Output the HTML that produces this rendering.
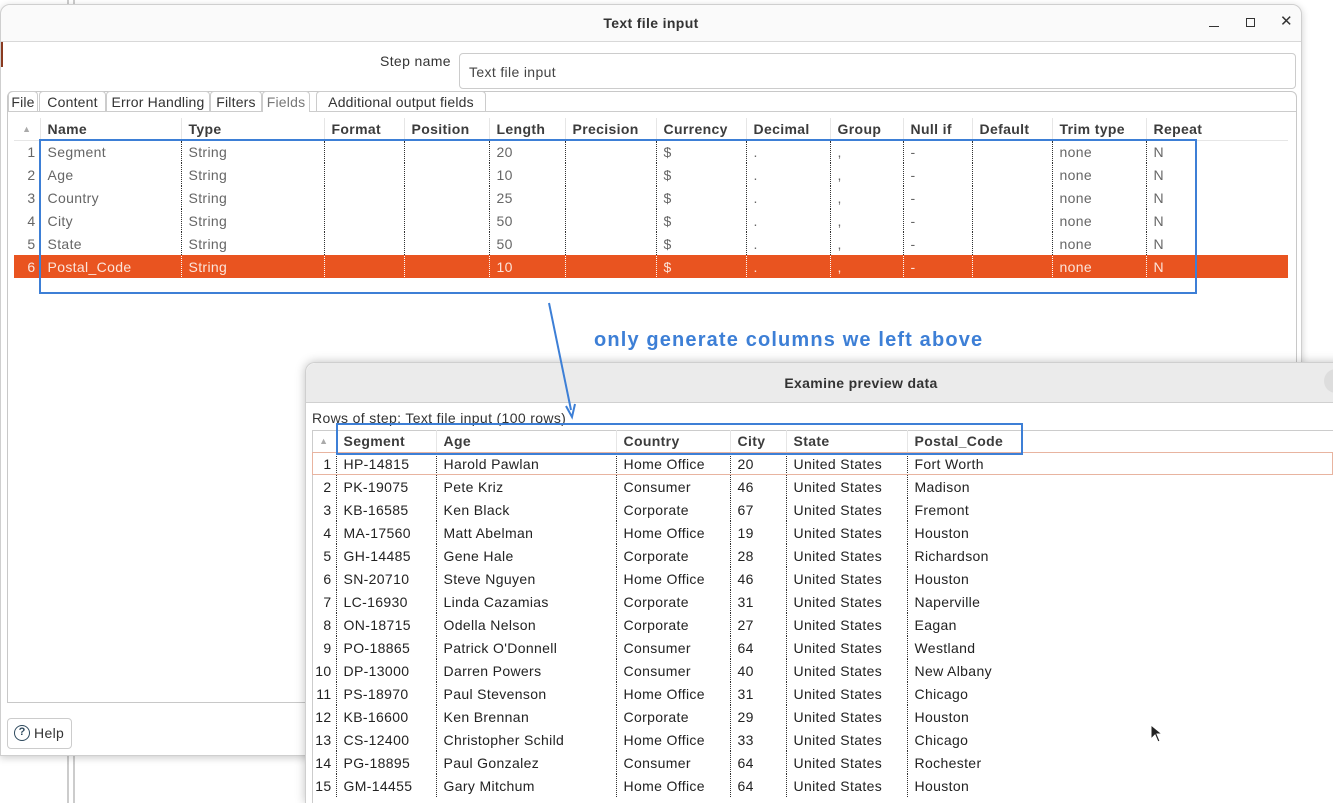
<!DOCTYPE html>
<html><head><meta charset="utf-8"><style>
*{box-sizing:border-box;margin:0;padding:0}
html,body{width:1333px;height:803px;overflow:hidden}
body{background:#fff;font-family:"Liberation Sans",sans-serif;font-size:14px;color:#333;position:relative;letter-spacing:0.35px}
.abs{position:absolute}
table{border-collapse:collapse;table-layout:fixed}
td,th{white-space:nowrap;overflow:hidden;text-align:left;padding:0 0 0 7px}
th{font-weight:bold;color:#3c3c3c;height:22px;border-left:1px solid #e6e6e6;border-bottom:1px solid #e6e6e6}
td{height:23px;border-left:1px dotted #333}
td.n{text-align:right;padding:0 4px 0 0;border-left:none;color:#555}
.t1 td{color:#666}
.t1 tr.sel td{background:#e95420;color:#fbe4da;border-left-color:#e95420}
.t2 td{color:#222}
.tab{position:absolute;top:0;height:20px;border:1px solid #ccc;border-bottom:none;border-radius:4px 4px 0 0;text-align:center;line-height:20px;letter-spacing:0.2px}
</style></head><body>
<div class="abs" style="left:67px;top:0;width:8px;height:803px;border-left:2px solid #ccc;border-right:2px solid #ccc"></div>

<div class="abs" style="left:0;top:4px;width:1302px;height:752px;background:#fff;border:1px solid #cfcfcf;border-radius:10px 10px 0 0;box-shadow:0 2px 8px rgba(0,0,0,.2)">
 <div class="abs" style="left:0;top:0;width:1300px;height:37px;background:#fafafa;border-bottom:1px solid #d8d8d8;border-radius:10px 10px 0 0"></div>
 <div class="abs" style="left:0;top:10px;width:1300px;text-align:center;font-weight:bold;color:#333">Text file input</div>
 <div class="abs" style="left:1208px;top:21px;width:10px;height:1px;background:#333"></div>
 <div class="abs" style="left:1245px;top:13px;width:9px;height:9px;border:1px solid #333"></div>
 <div class="abs" style="left:1279px;top:7px;font-size:15px;color:#333">✕</div>
 <div class="abs" style="left:0;top:37px;width:2px;height:25px;background:#8a3a20"></div>
 <div class="abs" style="left:379px;top:48px;color:#333">Step name</div>
 <div class="abs" style="left:458px;top:48px;width:837px;height:36px;border:1px solid #ccc;border-radius:4px;padding:10px 9px;color:#444">Text file input</div>
 <div class="abs" style="left:6px;top:86px;width:1290px;height:612px;border:1px solid #c8c8c8;border-radius:6px 6px 0 0"></div>
 <div class="abs" style="left:7px;top:106px;height:1px;background:#ccc;width:1288px"></div>
 <div class="abs" style="left:7px;top:86px;width:1290px;height:21px;color:#333">
  <div class="tab" style="left:0;width:30px">File</div>
  <div class="tab" style="left:31px;width:67px">Content</div>
  <div class="tab" style="left:98px;width:104px">Error Handling</div>
  <div class="tab" style="left:202px;width:52px">Filters</div>
  <div class="tab" style="left:254px;width:48px;color:#777;background:#fff;height:21px">Fields</div>
  <div class="tab" style="left:308px;width:170px">Additional output fields</div>
 </div>
</div>

<table class="abs t1" style="left:14px;top:118px;width:1274px">
<colgroup><col style="width:26px"><col style="width:141px"><col style="width:143px"><col style="width:80px"><col style="width:85px"><col style="width:76px"><col style="width:91px"><col style="width:90px"><col style="width:84px"><col style="width:73px"><col style="width:69px"><col style="width:80px"><col style="width:94px"><col style="width:142px"></colgroup>
<tr><th style="border-left:none;text-align:center;color:#aaa;font-size:9px;padding:0">▲</th><th>Name</th><th>Type</th><th>Format</th><th>Position</th><th>Length</th><th>Precision</th><th>Currency</th><th>Decimal</th><th>Group</th><th>Null if</th><th>Default</th><th>Trim type</th><th>Repeat</th></tr>
<tr><td class="n">1</td><td>Segment</td><td>String</td><td></td><td></td><td>20</td><td></td><td>$</td><td>.</td><td>,</td><td>-</td><td></td><td>none</td><td>N</td></tr>
<tr><td class="n">2</td><td>Age</td><td>String</td><td></td><td></td><td>10</td><td></td><td>$</td><td>.</td><td>,</td><td>-</td><td></td><td>none</td><td>N</td></tr>
<tr><td class="n">3</td><td>Country</td><td>String</td><td></td><td></td><td>25</td><td></td><td>$</td><td>.</td><td>,</td><td>-</td><td></td><td>none</td><td>N</td></tr>
<tr><td class="n">4</td><td>City</td><td>String</td><td></td><td></td><td>50</td><td></td><td>$</td><td>.</td><td>,</td><td>-</td><td></td><td>none</td><td>N</td></tr>
<tr><td class="n">5</td><td>State</td><td>String</td><td></td><td></td><td>50</td><td></td><td>$</td><td>.</td><td>,</td><td>-</td><td></td><td>none</td><td>N</td></tr>
<tr class="sel"><td class="n">6</td><td>Postal_Code</td><td>String</td><td></td><td></td><td>10</td><td></td><td>$</td><td>.</td><td>,</td><td>-</td><td></td><td>none</td><td>N</td></tr>
</table>
<div class="abs" style="left:39px;top:139px;width:1158px;height:155px;border:2px solid #3d7fd6"></div>

<div class="abs" style="left:7px;top:718px;width:65px;height:31px;border:1px solid #ccc;border-radius:4px;background:#fff"></div>
<div class="abs" style="left:14px;top:725px;width:16px;height:16px;border:1.5px solid #2f4a5e;border-radius:50%;font-size:11px;text-align:center;line-height:13px;color:#2f4a5e;font-weight:bold;letter-spacing:0">?</div>
<div class="abs" style="left:34px;top:725px;color:#333">Help</div>

<div class="abs" style="left:594px;top:329px;font-weight:bold;font-size:20px;letter-spacing:1.15px;color:#3d7fd6">only generate columns we left above</div>

<div class="abs" style="left:305px;top:362px;width:1040px;height:441px;background:#fff;border:1px solid #cfcfcf;border-bottom:none;border-radius:10px 0 0 0;box-shadow:0 0 10px rgba(0,0,0,.25)">
 <div class="abs" style="left:0;top:0;width:1040px;height:40px;background:#ebebeb;border-bottom:1px solid #d0d0d0;border-radius:10px 0 0 0"></div>
 <div class="abs" style="left:0;top:12px;width:1110px;text-align:center;font-weight:bold;color:#333">Examine preview data</div>
 <div class="abs" style="left:1018px;top:6px;width:24px;height:24px;border-radius:50%;background:#ddd"></div>
 <div class="abs" style="left:6px;top:47px;color:#333">Rows of step: Text file input (100 rows)</div>
 <div class="abs" style="left:6px;top:67px;width:1040px;height:380px;border-top:1px solid #ccc;border-left:1px solid #ccc"></div>
</div>
<table class="abs t2" style="left:312px;top:430px;width:1021px">
<colgroup><col style="width:24px"><col style="width:100px"><col style="width:180px"><col style="width:114px"><col style="width:56px"><col style="width:121px"><col style="width:115px"><col style="width:311px"></colgroup>
<tr><th style="border-left:none;text-align:center;color:#aaa;font-size:9px;padding:0">▲</th><th>Segment</th><th>Age</th><th>Country</th><th>City</th><th>State</th><th>Postal_Code</th><th></th></tr>
<tr style="outline:1px solid #e8b4a0;outline-offset:-1px"><td class="n">1</td><td>HP-14815</td><td>Harold Pawlan</td><td>Home Office</td><td>20</td><td>United States</td><td>Fort Worth</td><td style="border:none"></td></tr>
<tr><td class="n">2</td><td>PK-19075</td><td>Pete Kriz</td><td>Consumer</td><td>46</td><td>United States</td><td>Madison</td><td style="border:none"></td></tr>
<tr><td class="n">3</td><td>KB-16585</td><td>Ken Black</td><td>Corporate</td><td>67</td><td>United States</td><td>Fremont</td><td style="border:none"></td></tr>
<tr><td class="n">4</td><td>MA-17560</td><td>Matt Abelman</td><td>Home Office</td><td>19</td><td>United States</td><td>Houston</td><td style="border:none"></td></tr>
<tr><td class="n">5</td><td>GH-14485</td><td>Gene Hale</td><td>Corporate</td><td>28</td><td>United States</td><td>Richardson</td><td style="border:none"></td></tr>
<tr><td class="n">6</td><td>SN-20710</td><td>Steve Nguyen</td><td>Home Office</td><td>46</td><td>United States</td><td>Houston</td><td style="border:none"></td></tr>
<tr><td class="n">7</td><td>LC-16930</td><td>Linda Cazamias</td><td>Corporate</td><td>31</td><td>United States</td><td>Naperville</td><td style="border:none"></td></tr>
<tr><td class="n">8</td><td>ON-18715</td><td>Odella Nelson</td><td>Corporate</td><td>27</td><td>United States</td><td>Eagan</td><td style="border:none"></td></tr>
<tr><td class="n">9</td><td>PO-18865</td><td>Patrick O'Donnell</td><td>Consumer</td><td>64</td><td>United States</td><td>Westland</td><td style="border:none"></td></tr>
<tr><td class="n">10</td><td>DP-13000</td><td>Darren Powers</td><td>Consumer</td><td>40</td><td>United States</td><td>New Albany</td><td style="border:none"></td></tr>
<tr><td class="n">11</td><td>PS-18970</td><td>Paul Stevenson</td><td>Home Office</td><td>31</td><td>United States</td><td>Chicago</td><td style="border:none"></td></tr>
<tr><td class="n">12</td><td>KB-16600</td><td>Ken Brennan</td><td>Corporate</td><td>29</td><td>United States</td><td>Houston</td><td style="border:none"></td></tr>
<tr><td class="n">13</td><td>CS-12400</td><td>Christopher Schild</td><td>Home Office</td><td>33</td><td>United States</td><td>Chicago</td><td style="border:none"></td></tr>
<tr><td class="n">14</td><td>PG-18895</td><td>Paul Gonzalez</td><td>Consumer</td><td>64</td><td>United States</td><td>Rochester</td><td style="border:none"></td></tr>
<tr><td class="n">15</td><td>GM-14455</td><td>Gary Mitchum</td><td>Home Office</td><td>64</td><td>United States</td><td>Houston</td><td style="border:none"></td></tr>
</table>
<div class="abs" style="left:336px;top:423px;width:687px;height:32px;border:2px solid #3d7fd6"></div>
<svg class="abs" style="left:0;top:0" width="1333" height="803"><line x1="549" y1="303" x2="571" y2="410" stroke="#3d7fd6" stroke-width="2"/><path d="M566 406 L572 417 L575 404" fill="none" stroke="#3d7fd6" stroke-width="2"/></svg>
<svg class="abs" style="left:1150px;top:724px" width="14" height="20"><path d="M1 1 L1 15 L5 11 L8 18 L10 17 L7 10 L12 10 Z" fill="#222" stroke="#fff" stroke-width="1"/></svg>
</body></html>
